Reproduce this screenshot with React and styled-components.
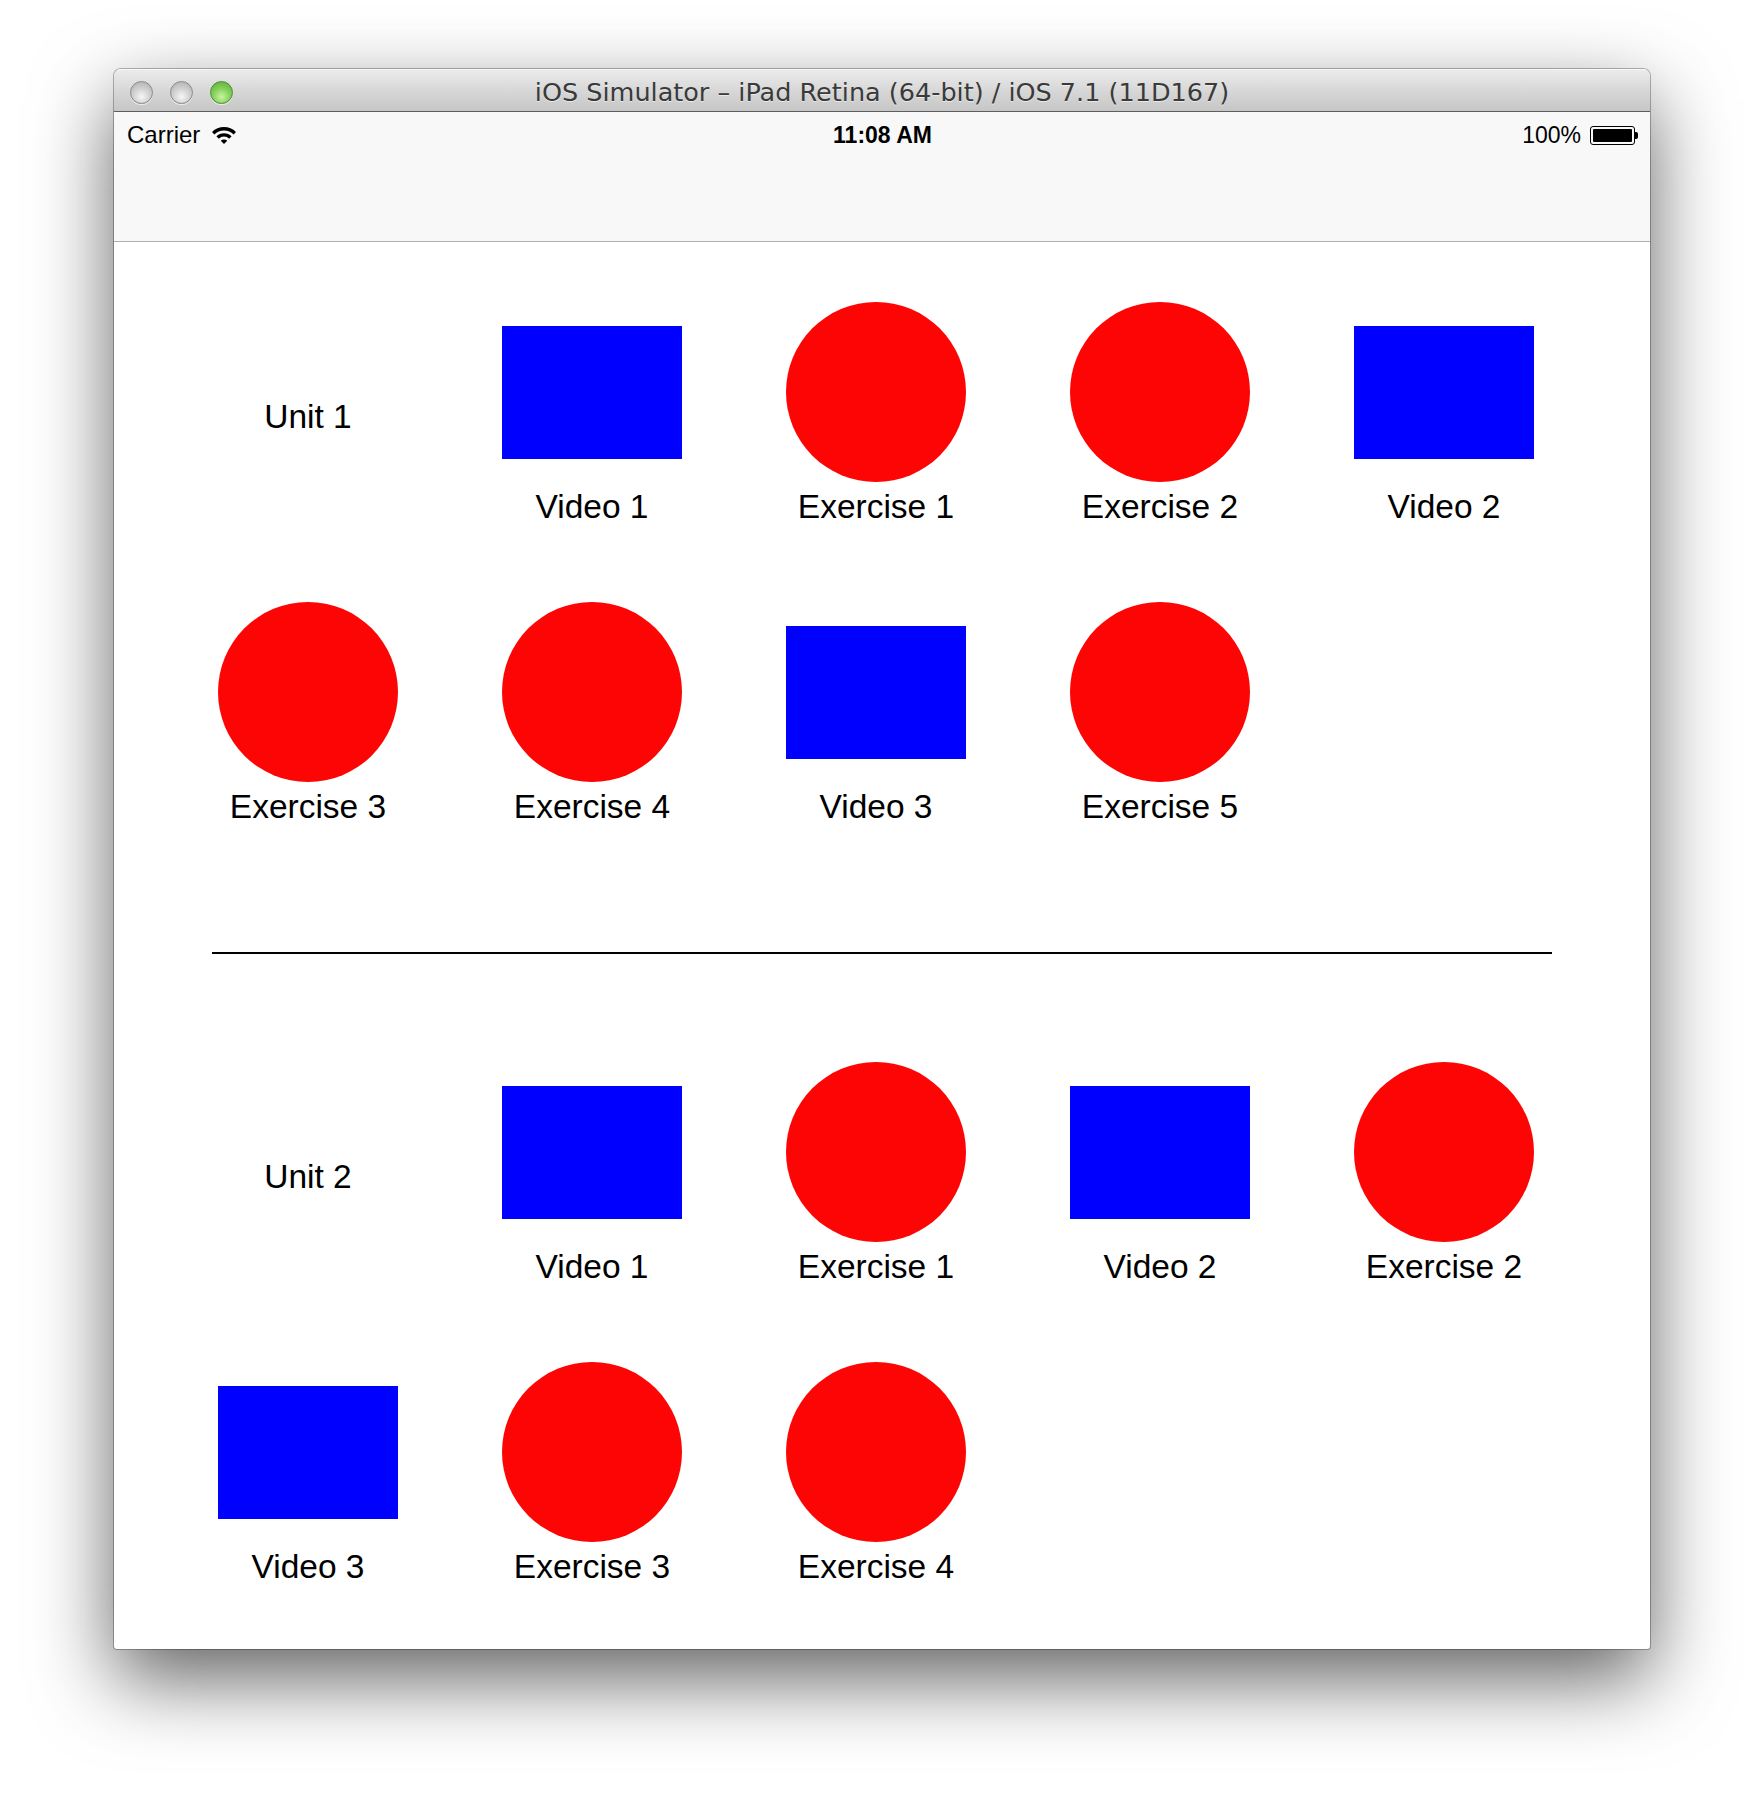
import React from "react";
import styled, { createGlobalStyle } from "styled-components";

const GlobalStyle = createGlobalStyle`
  html, body { margin: 0; padding: 0; background: #ffffff; }
  body { font-family: "Liberation Sans", Arial, sans-serif; color: #000; }
  *, *::before, *::after { box-sizing: border-box; }
`;

const Page = styled.div`
  width: 1764px;
  height: 1808px;
  padding: 69px 0 0 114px;
  overflow: hidden;
  background: #ffffff;
`;

const Window = styled.div`
  width: 1536px;
  background: #ffffff;
  border-radius: 7px 7px 3px 3px;
  overflow: hidden;
  box-shadow: 0 30px 80px rgba(0, 0, 0, 0.62), 0 0 0 1px rgba(0, 0, 0, 0.28);
`;

const TitleBar = styled.div`
  height: 43px;
  padding-top: 4px;
  display: grid;
  grid-template-columns: 1fr auto 1fr;
  align-items: center;
  background: linear-gradient(#ececec, #d6d6d6 55%, #c6c6c6);
  border-bottom: 1px solid #5e5e5e;
  box-shadow: inset 0 1px 0 #f8f8f8;
`;

const Lights = styled.div`
  display: flex;
  gap: 17px;
  padding-left: 16px;
`;

const Light = styled.span`
  width: 23px;
  height: 23px;
  border-radius: 50%;
  border: 1px solid ${(p) => (p.$green ? "#4f8d36" : "#8a8a8a")};
  background: ${(p) =>
    p.$green
      ? "radial-gradient(circle at 50% 70%, #c9f3a6 0%, #86d35c 45%, #55a834 100%)"
      : "radial-gradient(circle at 50% 70%, #f6f6f6 0%, #d2d2d2 45%, #a9a9a9 100%)"};
  box-shadow: 0 1px 0 rgba(255, 255, 255, 0.6);
`;

const Title = styled.div`
  font-family: "DejaVu Sans", "Liberation Sans", sans-serif;
  font-size: 25.5px;
  color: #3a3a3a;
  text-shadow: 0 1px 0 rgba(255, 255, 255, 0.55);
  white-space: nowrap;
`;

const NavBar = styled.div`
  height: 130px;
  background: #f8f8f8;
  border-bottom: 1px solid #b0b0b0;
`;

const StatusBar = styled.div`
  height: 44px;
  display: grid;
  grid-template-columns: 1fr auto 1fr;
  align-items: center;
  padding: 2px 12px 0 13px;
  font-size: 24px;
`;

const StatusLeft = styled.div`
  display: flex;
  align-items: center;
  gap: 12px;
`;

const StatusTime = styled.div`
  font-weight: 700;
  font-size: 23px;
`;

const StatusRight = styled.div`
  display: flex;
  align-items: center;
  justify-content: flex-end;
  gap: 9px;
  font-size: 23px;
`;

const Battery = styled.div`
  display: flex;
  align-items: center;
`;

const BatteryBody = styled.div`
  width: 45px;
  height: 19px;
  border: 1.5px solid #000;
  border-radius: 3px;
  padding: 2px;
`;

const BatteryFill = styled.div`
  width: 100%;
  height: 100%;
  background: #000;
  border-radius: 1px;
`;

const BatteryTip = styled.div`
  width: 3px;
  height: 7px;
  background: #000;
  border-radius: 0 2px 2px 0;
`;

const Section = styled.section`
  padding: ${(p) => p.$top}px 0 ${(p) => p.$bottom}px 104px;
`;

const Grid = styled.div`
  display: grid;
  grid-template-columns: repeat(5, 180px);
  column-gap: 104px;
  row-gap: 71px;
`;

const UnitCell = styled.div`
  height: 229px;
  display: flex;
  align-items: center;
  justify-content: center;
  font-size: 33.5px;
  white-space: nowrap;
`;

const Item = styled.div`
  display: flex;
  flex-direction: column;
  align-items: center;
`;

const ShapeSlot = styled.div`
  width: 180px;
  height: 180px;
  display: flex;
  align-items: center;
  justify-content: center;
`;

const Shape = styled.div`
  width: 180px;
  height: ${(p) => (p.$kind === "video" ? "133px" : "180px")};
  border-radius: ${(p) => (p.$kind === "video" ? "0" : "50%")};
  background: ${(p) => (p.$kind === "video" ? "#0000fe" : "#fe0505")};
`;

const Label = styled.div`
  font-size: 33.5px;
  line-height: 49px;
  white-space: nowrap;
`;

const Divider = styled.hr`
  margin: 0 98px;
  height: 2px;
  border: 0;
  background: #000;
`;

function band(cx, cy, R, r, deg) {
  const a = (deg * Math.PI) / 180;
  const s = Math.sin(a);
  const c = Math.cos(a);
  const p = (rad, sign) => `${(cx + sign * rad * s).toFixed(2)} ${(cy - rad * c).toFixed(2)}`;
  if (r === 0) {
    return `M${p(R, -1)} A${R} ${R} 0 0 1 ${p(R, 1)} L${cx} ${cy} Z`;
  }
  return `M${p(R, -1)} A${R} ${R} 0 0 1 ${p(R, 1)} L${p(r, 1)} A${r} ${r} 0 0 0 ${p(r, -1)} Z`;
}

function Wifi() {
  const cx = 12;
  const cy = 18;
  return (
    <svg width="24" height="19" viewBox="0 0 24 19" aria-hidden="true">
      <path d={band(cx, cy, 17, 13.6, 45)} fill="#000" />
      <path d={band(cx, cy, 10.8, 7.4, 45)} fill="#000" />
      <path d={band(cx, cy, 4.6, 0, 45)} fill="#000" />
    </svg>
  );
}

const unit1 = [
  ["video", "Video 1"],
  ["exercise", "Exercise 1"],
  ["exercise", "Exercise 2"],
  ["video", "Video 2"],
  ["exercise", "Exercise 3"],
  ["exercise", "Exercise 4"],
  ["video", "Video 3"],
  ["exercise", "Exercise 5"],
];

const unit2 = [
  ["video", "Video 1"],
  ["exercise", "Exercise 1"],
  ["video", "Video 2"],
  ["exercise", "Exercise 2"],
  ["video", "Video 3"],
  ["exercise", "Exercise 3"],
  ["exercise", "Exercise 4"],
];

function Unit({ name, items, top, bottom }) {
  return (
    <Section $top={top} $bottom={bottom}>
      <Grid>
        <UnitCell>{name}</UnitCell>
        {items.map(([kind, label], i) => (
          <Item key={i}>
            <ShapeSlot>
              <Shape $kind={kind} />
            </ShapeSlot>
            <Label>{label}</Label>
          </Item>
        ))}
      </Grid>
    </Section>
  );
}

export default function App() {
  return (
    <>
      <GlobalStyle />
      <Page>
        <Window>
          <TitleBar>
            <Lights>
              <Light />
              <Light />
              <Light $green />
            </Lights>
            <Title>iOS Simulator – iPad Retina (64-bit) / iOS 7.1 (11D167)</Title>
            <div />
          </TitleBar>
          <NavBar>
            <StatusBar>
              <StatusLeft>
                <span>Carrier</span>
                <Wifi />
              </StatusLeft>
              <StatusTime>11:08 AM</StatusTime>
              <StatusRight>
                <span>100%</span>
                <Battery>
                  <BatteryBody>
                    <BatteryFill />
                  </BatteryBody>
                  <BatteryTip />
                </Battery>
              </StatusRight>
            </StatusBar>
          </NavBar>
          <Unit name="Unit 1" items={unit1} top={60} bottom={121} />
          <Divider />
          <Unit name="Unit 2" items={unit2} top={108} bottom={58} />
        </Window>
      </Page>
    </>
  );
}
